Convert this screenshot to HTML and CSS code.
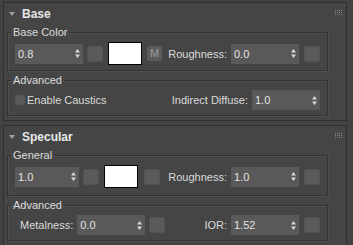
FILE: index.html
```html
<!DOCTYPE html>
<html lang="en">

<head>
    <meta charset="UTF-8">
    <meta name="viewport" content="width=device-width, initial-scale=1.0">
    <title>Material Parameters</title>
    <link rel="stylesheet" href="styles.css">
</head>

<body>
    <div class="panel">
        <!-- Base rollout -->
        <div class="rollout">
            <div class="rollout-head">
                <span class="caret"></span>
                <span class="rollout-title">Base</span>
                <svg class="grip" width="7" height="5" viewBox="0 0 7 5">
                    <g fill="#8a8a8a">
                        <rect x="0" y="0" width="1" height="1"/><rect x="2" y="0" width="1" height="1"/><rect x="4" y="0" width="1" height="1"/><rect x="6" y="0" width="1" height="1"/>
                        <rect x="0" y="2" width="1" height="1"/><rect x="2" y="2" width="1" height="1"/><rect x="4" y="2" width="1" height="1"/><rect x="6" y="2" width="1" height="1"/>
                        <rect x="0" y="4" width="1" height="1"/><rect x="2" y="4" width="1" height="1"/><rect x="4" y="4" width="1" height="1"/><rect x="6" y="4" width="1" height="1"/>
                    </g>
                </svg>
            </div>

            <fieldset class="group">
                <legend>Base Color</legend>
                <div class="row tall">
                    <div class="spinner">
                        <span>0.8</span>
                        <svg class="arrows" width="5" height="9" viewBox="0 0 5 9"><path d="M0 3.5L2.5 0L5 3.5Z M0 5.5L5 5.5L2.5 9Z" fill="#d8d8d8"/></svg>
                    </div>
                    <span class="btn-sq"></span>
                    <span class="swatch"></span>
                    <span class="btn-m">M</span>
                    <div class="row-right">
                        <span class="field-label">Roughness:</span>
                        <div class="spinner">
                            <span>0.0</span>
                            <svg class="arrows" width="5" height="9" viewBox="0 0 5 9"><path d="M0 3.5L2.5 0L5 3.5Z M0 5.5L5 5.5L2.5 9Z" fill="#d8d8d8"/></svg>
                        </div>
                        <span class="btn-sq"></span>
                    </div>
                </div>
            </fieldset>

            <fieldset class="group">
                <legend>Advanced</legend>
                <div class="row">
                    <span class="checkbox"></span>
                    <span class="check-label">Enable Caustics</span>
                    <div class="row-right">
                        <span class="field-label">Indirect Diffuse:</span>
                        <div class="spinner">
                            <span>1.0</span>
                            <svg class="arrows" width="5" height="9" viewBox="0 0 5 9"><path d="M0 3.5L2.5 0L5 3.5Z M0 5.5L5 5.5L2.5 9Z" fill="#d8d8d8"/></svg>
                        </div>
                    </div>
                </div>
            </fieldset>
        </div>

        <!-- Specular rollout -->
        <div class="rollout">
            <div class="rollout-head">
                <span class="caret"></span>
                <span class="rollout-title">Specular</span>
                <svg class="grip" width="7" height="5" viewBox="0 0 7 5">
                    <g fill="#8a8a8a">
                        <rect x="0" y="0" width="1" height="1"/><rect x="2" y="0" width="1" height="1"/><rect x="4" y="0" width="1" height="1"/><rect x="6" y="0" width="1" height="1"/>
                        <rect x="0" y="2" width="1" height="1"/><rect x="2" y="2" width="1" height="1"/><rect x="4" y="2" width="1" height="1"/><rect x="6" y="2" width="1" height="1"/>
                        <rect x="0" y="4" width="1" height="1"/><rect x="2" y="4" width="1" height="1"/><rect x="4" y="4" width="1" height="1"/><rect x="6" y="4" width="1" height="1"/>
                    </g>
                </svg>
            </div>

            <fieldset class="group loose">
                <legend>General</legend>
                <div class="row tall">
                    <div class="spinner narrow">
                        <span>1.0</span>
                        <svg class="arrows" width="5" height="9" viewBox="0 0 5 9"><path d="M0 3.5L2.5 0L5 3.5Z M0 5.5L5 5.5L2.5 9Z" fill="#d8d8d8"/></svg>
                    </div>
                    <span class="btn-sq"></span>
                    <span class="swatch"></span>
                    <span class="btn-sq"></span>
                    <div class="row-right">
                        <span class="field-label">Roughness:</span>
                        <div class="spinner">
                            <span>1.0</span>
                            <svg class="arrows" width="5" height="9" viewBox="0 0 5 9"><path d="M0 3.5L2.5 0L5 3.5Z M0 5.5L5 5.5L2.5 9Z" fill="#d8d8d8"/></svg>
                        </div>
                        <span class="btn-sq"></span>
                    </div>
                </div>
            </fieldset>

            <fieldset class="group">
                <legend>Advanced</legend>
                <div class="row">
                    <span class="field-label indent">Metalness:</span>
                    <div class="spinner">
                        <span>0.0</span>
                        <svg class="arrows" width="5" height="9" viewBox="0 0 5 9"><path d="M0 3.5L2.5 0L5 3.5Z M0 5.5L5 5.5L2.5 9Z" fill="#d8d8d8"/></svg>
                    </div>
                    <span class="btn-sq"></span>
                    <div class="row-right">
                        <span class="field-label">IOR:</span>
                        <div class="spinner">
                            <span>1.52</span>
                            <svg class="arrows" width="5" height="9" viewBox="0 0 5 9"><path d="M0 3.5L2.5 0L5 3.5Z M0 5.5L5 5.5L2.5 9Z" fill="#d8d8d8"/></svg>
                        </div>
                        <span class="btn-sq"></span>
                    </div>
                </div>
            </fieldset>
        </div>
    </div>
</body>

</html>
```

FILE: styles.css
```css
body {
    margin: 0;
    background-color: #424242;
    font-family: 'Liberation Sans', Arial, sans-serif;
    font-size: 11px;
    color: #dadada;
    overflow: hidden;
}

.panel {
    padding: 2px 0 0 3px;
}

.rollout {
    width: 342px;
    margin-bottom: 4px;
    padding-bottom: 4px;
    background-color: #454545;
    border: 1px solid #2f2f2f;
}

.rollout-head {
    display: flex;
    align-items: center;
    height: 21px;
    padding-left: 5px;
}

.caret {
    width: 0;
    height: 0;
    border-style: solid;
    border-width: 4px 3px 0 3px;
    border-color: #a0a0a0 transparent transparent transparent;
    margin-right: 7px;
}

.rollout-title {
    font-size: 12px;
    font-weight: bold;
    color: #e8e8e8;
}

.grip {
    margin-left: auto;
    margin-right: 4px;
    margin-top: -2px;
}

/* group boxes */
.group {
    margin: 2px 18px 0 3px;
    padding: 3px 7px 5px 7px;
    min-inline-size: 0;
    border: 1px solid #333333;
    box-shadow: 1px 1px 0 #505050, inset 1px 1px 0 #505050;
}

.group.loose {
    padding-bottom: 7px;
}

.group + .group {
    margin-top: 3px;
    padding-top: 3px;
}

.group legend {
    margin-left: -4px;
    padding: 0 2px;
    line-height: 13px;
    color: #dcdcdc;
}

.row {
    display: flex;
    align-items: center;
    height: 20px;
}

.row.tall {
    height: 23px;
}

.row-right {
    display: flex;
    align-items: center;
    margin-left: auto;
}

.spinner {
    display: flex;
    align-items: center;
    justify-content: space-between;
    box-sizing: border-box;
    width: 68px;
    height: 20px;
    padding: 0 3px 0 3px;
    background-color: #595959;
    color: #e2e2e2;
}

.spinner.narrow {
    width: 64px;
}

.btn-sq {
    box-sizing: border-box;
    width: 16px;
    height: 16px;
    margin-left: 4px;
    background-color: #5a5a5a;
    border: 1px solid #535353;
    border-radius: 2px;
}

.row-right .btn-sq {
    margin-left: 5px;
}

.swatch {
    box-sizing: border-box;
    width: 34px;
    height: 23px;
    margin-left: 5px;
    background-color: #ffffff;
    border: 1px solid #000000;
}

.spinner.narrow + .btn-sq + .swatch + .btn-sq {
    margin-left: 6px;
}

.btn-m {
    box-sizing: border-box;
    width: 15px;
    height: 15px;
    margin-left: 5px;
    background-color: #5b5b5b;
    border-radius: 2px;
    color: #a0a0a0;
    text-align: center;
    line-height: 15px;
}

.field-label {
    margin-right: 4px;
}

.field-label.indent {
    margin-left: 5px;
}

.checkbox {
    box-sizing: border-box;
    width: 10px;
    height: 10px;
    background-color: #5a5a5a;
    border: 1px solid #555555;
    margin-right: 2px;
}

.check-label {
    margin-left: 0;
}
```
